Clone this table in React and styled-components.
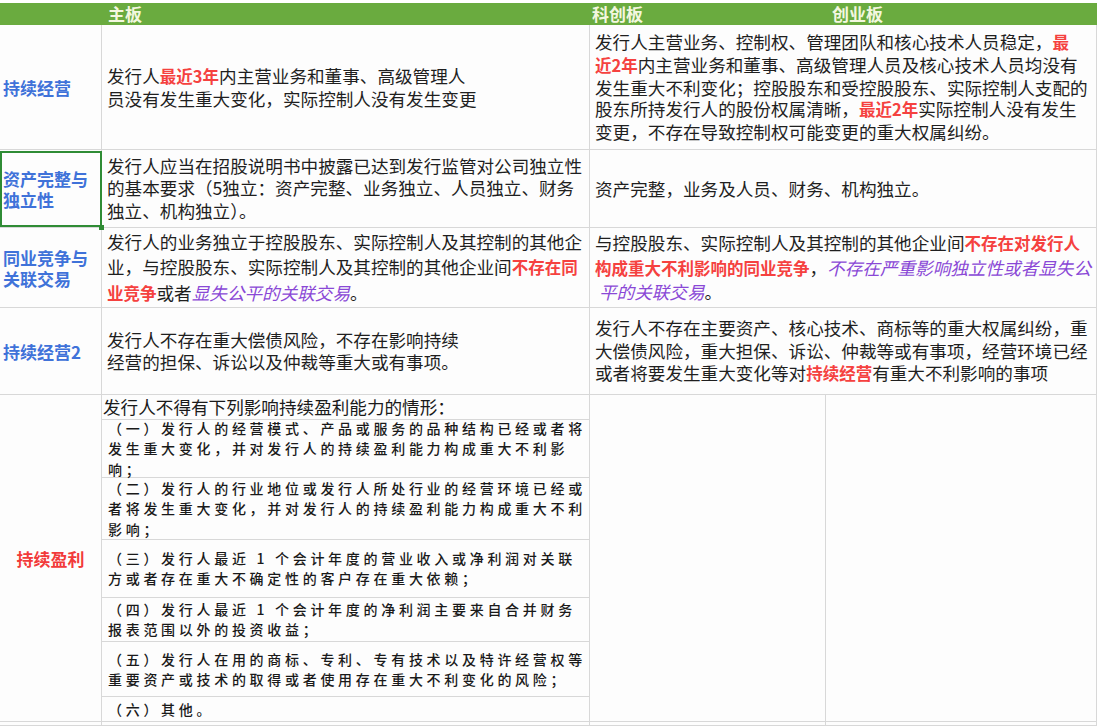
import React from "react";
import styled, { createGlobalStyle } from "styled-components";

const GlobalStyle = createGlobalStyle`
  html, body {
    margin: 0;
    padding: 0;
    background: #ffffff;
  }
  body {
    font-family: "Noto Sans CJK SC", "Noto Sans", sans-serif;
    color: #1f1f1f;
  }
`;

const Sheet = styled.div`
  display: grid;
  grid-template-columns: 102px 488px 236px 271px;
  grid-template-rows: 22px 125px 78px 80px 87px 327px 4px;
  width: 1097px;
  margin-top: 3px;
  background: #fdfdfd;
`;

const Head = styled.div`
  background: #6aab3f;
  color: #f3f7df;
  font-size: 17px;
  font-weight: 700;
  line-height: 22px;
  padding-left: ${(p) => p.$pad || 6}px;
  white-space: nowrap;
`;

const Cell = styled.div`
  box-sizing: border-box;
  position: relative;
  display: flex;
  align-items: center;
  border-right: 1px solid #d8d8d8;
  border-bottom: 1px solid #d8d8d8;
  grid-column: ${(p) => (p.$span ? `span ${p.$span}` : "auto")};
  min-width: 0;
`;

const Label = styled(Cell)`
  justify-content: ${(p) => (p.$center ? "center" : "flex-start")};
  padding-left: ${(p) => (p.$center ? 0 : 3)}px;
  color: ${(p) => (p.$red ? "#f23a3a" : "#3f72d9")};
  font-size: 17px;
  font-weight: 600;
  line-height: 21px;
  white-space: nowrap;

  ${(p) =>
    p.$selected &&
    `
    &::after {
      content: "";
      position: absolute;
      left: 0;
      top: 1px;
      right: -1px;
      bottom: 0;
      border: 2px solid #2f8c35;
    }
    &::before {
      content: "";
      position: absolute;
      right: -3px;
      bottom: -3px;
      width: 5px;
      height: 5px;
      background: #2f8c35;
      z-index: 2;
    }
  `}
`;

const Text = styled(Cell)`
  padding-left: 5px;
  font-size: 17.6px;
  line-height: ${(p) => p.$lh || 22}px;
  white-space: nowrap;
`;

const Red = styled.span`
  color: #f5413f;
  font-weight: 600;
  font-size: 16.5px;
`;

const Purple = styled.span`
  color: #8a48d6;
  font-style: italic;
`;

const SubList = styled(Cell)`
  flex-direction: column;
  align-items: stretch;
`;

const SubRow = styled.div`
  box-sizing: border-box;
  height: ${(p) => p.$h}px;
  display: flex;
  align-items: center;
  padding-left: ${(p) => (p.$title ? 1 : 6)}px;
  border-bottom: ${(p) => (p.$last ? "none" : "1px solid #d8d8d8")};
  font-size: ${(p) => (p.$title ? 17.6 : 14)}px;
  letter-spacing: ${(p) => (p.$title ? 0 : 3.7)}px;
  font-weight: ${(p) => (p.$title ? 400 : 500)};
  line-height: ${(p) => (p.$title ? 22 : 20.5)}px;
  white-space: nowrap;
  color: #1a1a1a;
`;

const Empty = styled(Cell)``;

const subItems = [
  {
    h: 58,
    lines: [
      "（一）发行人的经营模式、产品或服务的品种结构已经或者将",
      "发生重大变化，并对发行人的持续盈利能力构成重大不利影",
      "响；",
    ],
  },
  {
    h: 62,
    lines: [
      "（二）发行人的行业地位或发行人所处行业的经营环境已经或",
      "者将发生重大变化，并对发行人的持续盈利能力构成重大不利",
      "影响；",
    ],
  },
  {
    h: 58,
    lines: [
      "（三）发行人最近 1 个会计年度的营业收入或净利润对关联",
      "方或者存在重大不确定性的客户存在重大依赖；",
    ],
  },
  {
    h: 45,
    lines: [
      "（四）发行人最近 1 个会计年度的净利润主要来自合并财务",
      "报表范围以外的投资收益；",
    ],
  },
  {
    h: 55,
    lines: [
      "（五）发行人在用的商标、专利、专有技术以及特许经营权等",
      "重要资产或技术的取得或者使用存在重大不利变化的风险；",
    ],
  },
  { h: 24, lines: ["（六）其他。"] },
];

function Lines({ lines }) {
  return (
    <div>
      {lines.map((l, i) => (
        <div key={i}>{l}</div>
      ))}
    </div>
  );
}

export default function App() {
  return (
    <>
      <GlobalStyle />
      <Sheet>
        <Head />
        <Head>主板</Head>
        <Head $pad={2}>科创板</Head>
        <Head>创业板</Head>

        <Label>持续经营</Label>
        <Text $lh={21.5}>
          <div>
            发行人<Red>最近3年</Red>内主营业务和董事、高级管理人
            <br />
            员没有发生重大变化，实际控制人没有发生变更
          </div>
        </Text>
        <Text $span={2} $lh={21.8}>
          <div>
            发行人主营业务、控制权、管理团队和核心技术人员稳定，<Red>最</Red>
            <br />
            <Red>近2年</Red>内主营业务和董事、高级管理人员及核心技术人员均没有
            <br />
            发生重大不利变化；控股股东和受控股股东、实际控制人支配的
            <br />
            股东所持发行人的股份权属清晰，<Red>最近2年</Red>实际控制人没有发生
            <br />
            变更，不存在导致控制权可能变更的重大权属纠纷。
          </div>
        </Text>

        <Label $selected>
          <div>
            资产完整与
            <br />
            独立性
          </div>
        </Label>
        <Text $lh={22.5}>
          <div>
            发行人应当在招股说明书中披露已达到发行监管对公司独立性
            <br />
            的基本要求（5独立：资产完整、业务独立、人员独立、财务
            <br />
            独立、机构独立）。
          </div>
        </Text>
        <Text $span={2}>资产完整，业务及人员、财务、机构独立。</Text>

        <Label>
          <div>
            同业竞争与
            <br />
            关联交易
          </div>
        </Label>
        <Text $lh={25}>
          <div>
            发行人的业务独立于控股股东、实际控制人及其控制的其他企
            <br />
            业，与控股股东、实际控制人及其控制的其他企业间<Red>不存在同</Red>
            <br />
            <Red>业竞争</Red>或者<Purple>显失公平的关联交易</Purple>。
          </div>
        </Text>
        <Text $span={2} $lh={23.5}>
          <div>
            与控股股东、实际控制人及其控制的其他企业间<Red>不存在对发行人</Red>
            <br />
            <Red>构成重大不利影响的同业竞争</Red>，
            <Purple>不存在严重影响独立性或者显失公</Purple>
            <br />
            &nbsp;<Purple>平的关联交易</Purple>。
          </div>
        </Text>

        <Label>持续经营2</Label>
        <Text>
          <div>
            发行人不存在重大偿债风险，不存在影响持续
            <br />
            经营的担保、诉讼以及仲裁等重大或有事项。
          </div>
        </Text>
        <Text $span={2} $lh={22.5}>
          <div>
            发行人不存在主要资产、核心技术、商标等的重大权属纠纷，重
            <br />
            大偿债风险，重大担保、诉讼、仲裁等或有事项，经营环境已经
            <br />
            或者将要发生重大变化等对<Red>持续经营</Red>有重大不利影响的事项
          </div>
        </Text>

        <Label $red $center>
          持续盈利
        </Label>
        <SubList>
          <SubRow $h={25} $title>
            发行人不得有下列影响持续盈利能力的情形：
          </SubRow>
          {subItems.map((it, i) => (
            <SubRow key={i} $h={it.h} $last={i === subItems.length - 1}>
              <Lines lines={it.lines} />
            </SubRow>
          ))}
        </SubList>
        <Empty />
        <Empty />

        <Empty />
        <Empty />
        <Empty />
        <Empty />
      </Sheet>
    </>
  );
}
